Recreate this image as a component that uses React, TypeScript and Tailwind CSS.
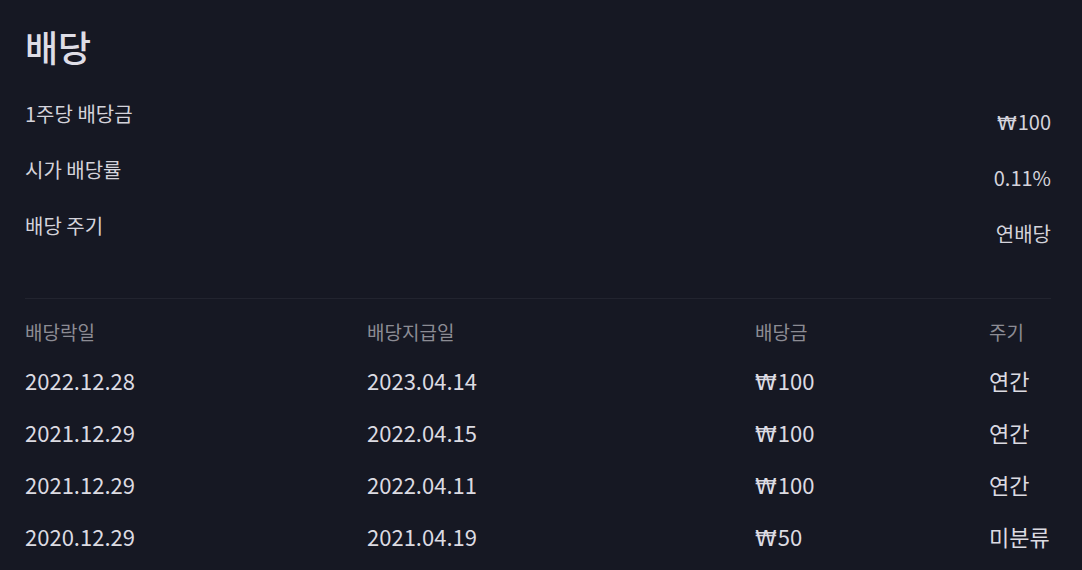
import React from "react";

const summary = [
  { label: "1주당 배당금", value: "₩100" },
  { label: "시가 배당률", value: "0.11%" },
  { label: "배당 주기", value: "연배당" },
];

const rows = [
  ["2022.12.28", "2023.04.14", "₩100", "연간"],
  ["2021.12.29", "2022.04.15", "₩100", "연간"],
  ["2021.12.29", "2022.04.11", "₩100", "연간"],
  ["2020.12.29", "2021.04.19", "₩50", "미분류"],
];

function Won({ text }: { text: string }) {
  if (!text.startsWith("₩")) return <>{text}</>;
  return (
    <>
      <span style={{ fontFamily: '"DejaVu Sans", sans-serif' }} className="mr-[1px] leading-none">₩</span>
      {text.slice(1)}
    </>
  );
}

export default function App() {
  return (
    <div
      className="w-[1082px] h-[570px] overflow-hidden bg-[#161823] pl-[25px] pr-[31px] pt-[20px]"
      style={{ fontFamily: '"Noto Sans CJK KR", "Noto Sans", sans-serif' }}
    >
      <h1 className="text-[36px] leading-[52px] font-medium text-[#dedde6]">배당</h1>
      <div className="mt-[31px] flex flex-col gap-[34px]">
        {summary.map((s) => (
          <div key={s.label} className="flex justify-between h-[22px] text-[20px] leading-[22px] text-[#d4d3db]">
            <span>{s.label}</span>
            <span className="translate-y-[8px]"><Won text={s.value} /></span>
          </div>
        ))}
      </div>
      <div className="mt-[61px] h-px bg-[#22242f]" />
      <div className="grid grid-cols-[342px_388px_234px_1fr] mt-[20px]">
        {["배당락일", "배당지급일", "배당금", "주기"].map((h) => (
          <div key={h} className="text-[19px] leading-[26px] text-[#8c8c94]">{h}</div>
        ))}
      </div>
      <div className="mt-[22px] flex flex-col gap-[26px]">
        {rows.map((r, i) => (
          <div key={i} className="grid grid-cols-[342px_388px_234px_1fr] h-[26px] text-[22px] leading-[26px] text-[#dcdbe2]">
            {r.map((c, j) => (
              <div key={j} className="h-[26px]"><Won text={c} /></div>
            ))}
          </div>
        ))}
      </div>
    </div>
  );
}
